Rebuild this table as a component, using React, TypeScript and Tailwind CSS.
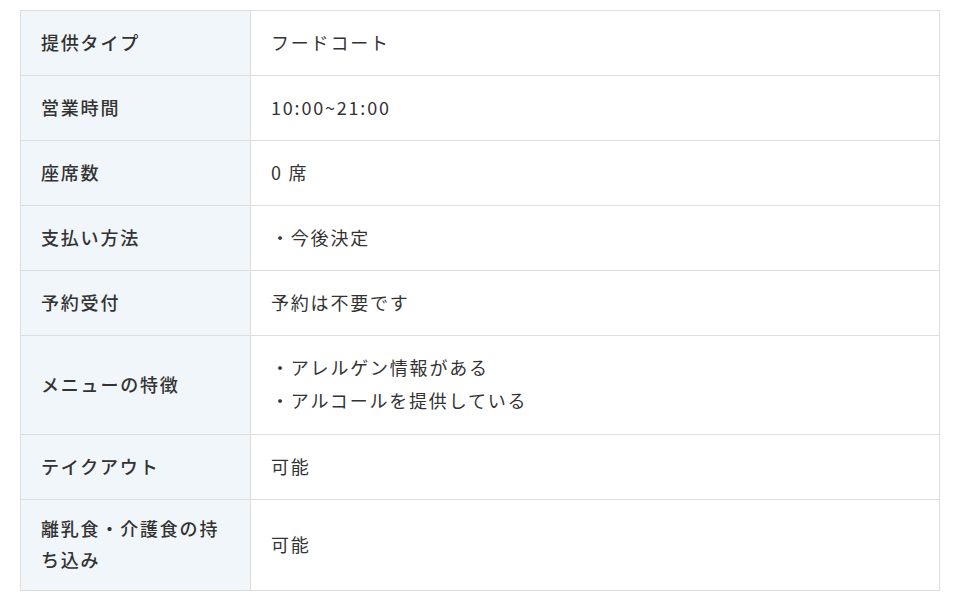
const rows: { label: string; value: string[] }[] = [
  { label: "提供タイプ", value: ["フードコート"] },
  { label: "営業時間", value: ["10:00~21:00"] },
  { label: "座席数", value: ["0 席"] },
  { label: "支払い方法", value: ["・今後決定"] },
  { label: "予約受付", value: ["予約は不要です"] },
  { label: "メニューの特徴", value: ["・アレルゲン情報がある", "・アルコールを提供している"] },
  { label: "テイクアウト", value: ["可能"] },
  { label: "離乳食・介護食の持ち込み", value: ["可能"] },
];

export default function App() {
  return (
    <div
      className="min-h-screen bg-white px-5 pt-[10px] text-[#333] text-[18px] tracking-[0.1em]"
      style={{ fontFamily: '"Noto Sans CJK JP", "Noto Sans", sans-serif' }}
    >
      <table className="w-[920px] border-collapse border border-[#dddddd]">
        <tbody>
          {rows.map((row) => (
            <tr key={row.label} className="border-b border-[#dddddd]">
              <th className="w-[230px] h-[65px] border-r border-[#dddddd] bg-[#f1f6fa] px-5 pt-[13px] pb-[15px] text-left align-middle font-medium leading-[31px]">
                {row.label}
              </th>
              <td className="h-[65px] px-5 pt-[13px] pb-[15px] align-middle leading-[31px]">
                {row.value.length > 1 ? (
                  <ul className="flex flex-col gap-[2px] py-[3px]">
                    {row.value.map((v) => (
                      <li key={v}>{v}</li>
                    ))}
                  </ul>
                ) : (
                  row.value[0]
                )}
              </td>
            </tr>
          ))}
        </tbody>
      </table>
    </div>
  );
}
